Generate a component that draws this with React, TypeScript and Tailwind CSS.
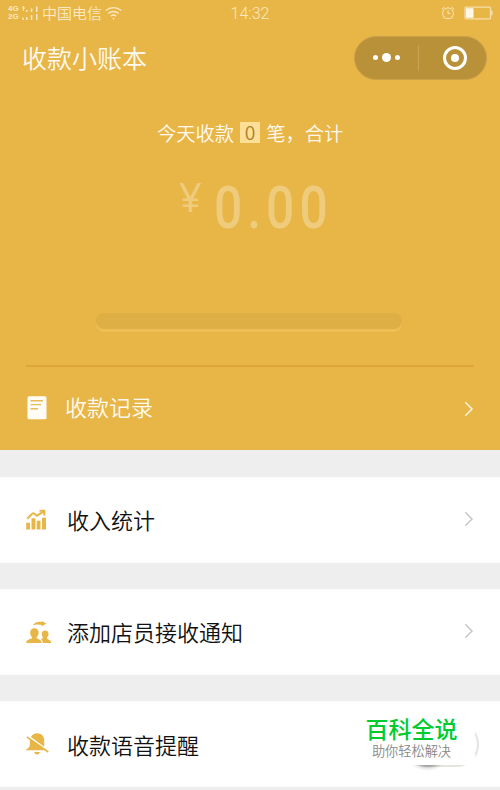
import type { ReactNode } from "react";

interface MenuRowProps {
  icon: ReactNode;
  label: string;
  children?: ReactNode;
}

function Chevron({ className }: { className: string }) {
  return (
    <svg viewBox="0 0 10 16" className={`h-4 w-[10px] ${className}`} fill="none" stroke="currentColor" strokeWidth="1.5">
      <path d="M1.3 1.3 8 8l-6.7 6.7" />
    </svg>
  );
}

function MenuRow({ icon, label, children }: MenuRowProps) {
  return (
    <div className="flex h-[86px] items-center bg-white pr-[26px] pl-[26px] text-[#111]">
      <div className="w-[41px] text-[#e8b547]">{icon}</div>
      <span className="flex-1 pb-[1px] text-[22px] leading-none font-[350]">{label}</span>
      {children}
    </div>
  );
}

function StatusBar() {
  return (
    <div className="relative flex h-[26px] items-center pr-[7px] pl-[8px] text-[#fbe9bf]">
      <div className="flex w-[14px] flex-col font-['Liberation_Sans'] text-[8px] leading-[8px] font-bold">
        <span>4G</span>
        <span>2G</span>
      </div>
      {/* Signal bars of both SIM cards */}
      <svg viewBox="0 0 18 16" className="h-4 w-[18px]" fill="currentColor">
        <path d="M0 2.5h1V1h1v1.500h1v1H2V6H1V3.500H0zM.300 12.500h1.500V15H.300zM4 5h1.500v2H4zM4 12h1.500v3H4zM8.800 3.500h1.500V7H8.800zM8.800 10h1.500v5H8.800z" />
        <path d="M14 1.500h1.500V7H14zM14 9h1.500v6H14z" />
      </svg>
      <span className="ml-[2px] text-[15px] leading-none font-[350]">中国电信</span>
      <svg viewBox="0 0 18 14" className="ml-[3px] h-[14px] w-[18px]" fill="none" stroke="currentColor" strokeWidth="1.4">
        <path d="M.8 4.600a11.500 11.500 0 0 1 15.400 0M3.200 7.500a8 8 0 0 1 10.600 0M5.800 10.200a4.200 4.200 0 0 1 5.400 0" />
        <circle cx="8.5" cy="12.6" r=".9" fill="currentColor" stroke="none" />
      </svg>
      <span className="absolute inset-x-0 top-[5px] text-center font-['Roboto'] text-[16px] leading-[18px] font-light">14:32</span>
      <div className="ml-auto flex items-center gap-[9px]">
        <svg viewBox="0 0 14 14" className="h-[14px] w-[14px]" fill="none" stroke="currentColor" strokeWidth="1">
          <circle cx="7" cy="7.3" r="5.4" />
          <path d="M7 4.300v3.300h2.300M.9 3.200 3.500 1M13.100 3.200 10.500 1M3 11.500l-1 1.200M11 11.500l1 1.200" />
        </svg>
        <svg viewBox="0 0 29 14" className="h-[14px] w-[29px]">
          <rect x="1" y="1.2" width="25.5" height="11.6" rx="1" fill="none" stroke="#f5dfac" strokeWidth="1.3" />
          <path d="M2 2.200h7.500v9.600H2z" fill="#fff8e8" />
          <path d="M27 4.700h1.500v4.600H27z" fill="#f5dfac" />
        </svg>
      </div>
    </div>
  );
}

function RecordIcon() {
  return (
    <svg viewBox="0 0 20 24" className="ml-[0.5px] h-6 w-5">
      <rect x=".5" y=".3" width="19" height="23" rx="1.6" fill="#fffdf6" />
      <path d="M3.500 4.800h12.500M3.500 8.600h10.500M3.500 12.800h7.500" stroke="#e8bb58" strokeWidth="1.4" />
    </svg>
  );
}

function ChartIcon() {
  return (
    <svg viewBox="0 0 21 21" className="h-[21px] w-[21px]" fill="currentColor">
      <path d="M.2 13.700h3.800v6.700H.2zM5.500 9.300h3.900v11.100H5.500zM10.700 11.700h3.800v8.700h-3.800zM16 8.700h4v11.700h-4z" />
      <path d="m1.300 9.700 4.800-5q1.100-.8 2.200 0l2.700 2 6.700-4.300" fill="none" stroke="currentColor" strokeWidth="2" />
      <path d="M13.700.9h5.400v5.300h-1.700V2.600h-3.700z" stroke="currentColor" strokeWidth=".4" />
    </svg>
  );
}

function StaffIcon() {
  return (
    <svg viewBox="0 0 26 24" className="h-6 w-[26px]" fill="currentColor">
      <path d="M6.700 5.200c2.300-3 5.600-3.900 9-3.200V.9l4.600 2.700-4.600 3V5c-3-.9-6-.8-9 .2z" />
      <path d="M8.400 8.300c2.700 0 4.200 1.900 4.200 4.200 0 2.100-.8 3.600-1.900 4.600v1c.9 1.100 5 1.500 5 4.900H.2c0-3.400 4.800-3.800 5.800-4.900v-1c-1.100-1-1.800-2.500-1.800-4.600 0-2.300 1.500-4.200 4.200-4.200z" />
      <path d="M19.200 10.400c2.200 0 3.300 1.500 3.300 3.400 0 1.700-.6 2.900-1.500 3.700v.9c.7.900 4.200 1.300 4.200 4.600h-8.400c-.1-2.300-1-3.400-2.100-4.100 1-.2 1.800-.5 2.300-.9v-.5c-.8-.8-1.200-2-1.200-3.700 0-1.900 1.100-3.400 3.400-3.400z" />
    </svg>
  );
}

function MutedBellIcon() {
  return (
    <svg viewBox="0 0 24 24" className="h-6 w-6" fill="currentColor">
      <path d="M4.900 4.900C6.300 2.500 8.500 1.300 11.200 1.300c4.400 0 7 3.100 7 7.200v6.300z" />
      <path d="M3.900 6.500 19 18.300H.3v-1c2.300-1 3.600-2.500 3.600-5z" />
      <path d="M.8 4.900 22.300 20" stroke="currentColor" strokeWidth="1.6" />
      <path d="M8.200 20h5.700c-.4 1.700-1.500 2.500-2.800 2.500S8.600 21.700 8.200 20z" />
    </svg>
  );
}

export default function App() {
  return (
    <div className="relative h-[790px] w-[500px] overflow-hidden bg-[#eee] font-['Noto_Sans_CJK_SC',sans-serif]">
      <header className="flex h-[450px] flex-col bg-[#e8b547] text-[#fffaf0]">
        <StatusBar />

        {/* Title and capsule */}
        <div className="mt-[10px] flex h-11 items-center justify-between pr-[13px] pl-[22px]">
          <h1 className="text-[25px] leading-none font-[350]">收款小账本</h1>
          <div className="flex h-11 w-[133px] items-center rounded-full border border-[#c9a14a] bg-[#b99139]">
            <div className="flex flex-1 items-center justify-center gap-1">
              <span className="h-[5px] w-[5px] rounded-full bg-white" />
              <span className="h-[9px] w-[9px] rounded-full bg-white" />
              <span className="h-[5px] w-[5px] rounded-full bg-white" />
            </div>
            <span className="h-[26px] w-px bg-[#c9a455]" />
            <div className="flex flex-1 items-center justify-center pl-[4px]">
              <div className="flex h-6 w-6 items-center justify-center rounded-full border-[3px] border-white">
                <span className="h-2 w-2 rounded-full bg-white" />
              </div>
            </div>
          </div>
        </div>

        {/* Today's total */}
        <div className="mt-[42px] flex h-[22px] items-center pl-[157px] text-[19.3px] leading-none font-[350]">
          <span className="pt-[1px]">今天收款</span>
          <span className="mx-[6px] flex h-[21px] w-5 items-center justify-center bg-[#ffdf98] text-[#a8812c]">0</span>
          <span className="pt-[1px]">笔，合计</span>
        </div>
        <div className="mt-[36px] flex h-[56px] pl-[179px] text-[#efcb7c]">
          <span className="mt-[-8px] w-[35px] font-['Noto_Sans'] text-[40px] leading-[50px]">¥</span>
          <span className="origin-left scale-x-[0.83] font-['Roboto'] text-[60px] leading-[56px] font-medium tracking-[6px]">0.00</span>
        </div>

        <div className="mr-[98.5px] ml-[96px] mt-[77px] h-[16px] rounded-full bg-[#deaf45] shadow-[0_3px_0_#efbe55]" />
        <div className="mx-[26px] mt-[36px] h-[2px] bg-[#dfa637]" />

        <div className="flex h-[84px] items-center pr-[26px] pl-[26px]">
          <div className="w-[39px]">
            <RecordIcon />
          </div>
          <span className="flex-1 pb-[4px] text-[22px] leading-none font-[350]">收款记录</span>
          <Chevron className="mt-[2px] text-[#fff5dd]" />
        </div>
      </header>

      <main className="mt-[26.5px] flex flex-col gap-[26.4px]">
        <MenuRow icon={<ChartIcon />} label="收入统计">
          <Chevron className="mb-[2px] text-[#c8c8cc]" />
        </MenuRow>
        <MenuRow icon={<StaffIcon />} label="添加店员接收通知">
          <Chevron className="mb-[2px] text-[#c8c8cc]" />
        </MenuRow>
        <MenuRow icon={<MutedBellIcon />} label="收款语音提醒">
          <div className="mr-[-5px] h-[45px] w-[74px] rounded-full border-2 border-[#e4e4e0]">
            <div className="h-[41px] w-[41px] rounded-full bg-white shadow-[0_2px_4px_rgba(0,0,0,0.4)]" />
          </div>
        </MenuRow>
      </main>

      {/* Site badge over the switch */}
      <div className="absolute top-[704px] left-[358px] flex h-[61px] w-[117px] flex-col items-center bg-white pt-[12px] pr-[10px]">
        <span className="text-[23px] leading-[24px] font-medium text-[#00cc2f]">百科全说</span>
        <span className="mt-[4px] text-[13.2px] leading-[14px] font-[350] text-[#888]">助你轻松解决</span>
      </div>
    </div>
  );
}
